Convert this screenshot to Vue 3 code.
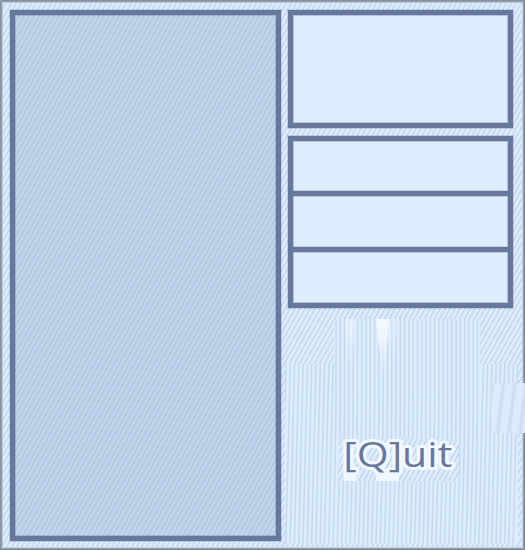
<script setup>
const slots = [1, 2, 3]

// Slanted hatching that covers the whole window.
const diagonals = Array.from({ length: 168 }, (_, i) => `M${i * 5 + 3} 0l-308 550`).join('')

// Near-vertical grain: it starts higher in the middle and drifts left further down.
const grain = Array.from({ length: 55 }, (_, i) => {
  const x = 284.5 + i * 4.29
  const middle = x > 334 && x < 480
  return middle
    ? `M${x} 319V390Q${x} 450 ${x - 3} 544`
    : `M${x + 1.5} 364L${x - 3} 544`
}).join('')
</script>

<template>
  <main class="game">
    <svg class="texture" width="525" height="550" viewBox="0 0 525 550" aria-hidden="true">
      <defs>
        <linearGradient id="fold">
          <stop offset="0" stop-color="#dcecfc" />
          <stop offset=".5" stop-color="#dcecfc" />
          <stop offset=".78" stop-color="#c8dbef" />
          <stop offset="1" stop-color="#dcecfc" />
        </linearGradient>
        <pattern id="wide" width="11.3" height="50" patternUnits="userSpaceOnUse" patternTransform="translate(495 383) skewX(-7)">
          <rect width="11.3" height="50" fill="url(#fold)" />
        </pattern>
        <linearGradient id="glint" x2="0" y2="1">
          <stop offset="0" stop-color="#f4f9ff" />
          <stop offset=".35" stop-color="#f0f7ff" stop-opacity=".9" />
          <stop offset="1" stop-color="#e8f3ff" stop-opacity="0" />
        </linearGradient>
        <clipPath id="grainArea"><path d="M285 364H334V319H480V364H518V544H285z" /></clipPath>
      </defs>
      <rect width="525" height="550" fill="#dcedfe" />
      <path :d="diagonals" stroke="#c3d6eb" stroke-width="1.5" />
      <g clip-path="url(#grainArea)">
        <rect x="285" y="319" width="233" height="225" fill="#dcedfe" />
        <path :d="grain" fill="none" stroke="#c3d7ee" stroke-width="1.4" />
      </g>
      <path d="M345 319h10l-2 50h-5z" fill="url(#glint)" opacity=".5" />
      <path d="M376 319h13l-4 57h-3z" fill="url(#glint)" />
      <path d="M389 319h9l-3 45h-7z" fill="url(#glint)" opacity=".3" />
      <path d="M.5 550V.5H525" fill="none" stroke="#8792a0" />
      <path d="M1.5 549V1.5H524" fill="none" stroke="#959fac" />
      <path d="M2.5 548V2.5H523" fill="none" stroke="#bac8d7" />
      <path d="M524.5 0V549.5H0" fill="none" stroke="#77818c" />
      <path d="M523.5 1V548.5H1" fill="none" stroke="#98a4b1" />
      <path d="M522.5 2V547.5H2" fill="none" stroke="#c0cfdf" />
      <rect x="491" y="383" width="34" height="50" fill="url(#wide)" />
    </svg>

    <section class="panel board"></section>
    <aside class="side">
      <section class="panel preview"></section>
      <section class="panel stats">
        <div v-for="slot in slots" :key="slot" class="stat"></div>
      </section>
      <svg class="quit" width="120" height="42" viewBox="339 439 120 42" role="button">
        <clipPath id="quitArea"><rect x="339" y="439" width="120" height="42" /></clipPath>
        <g clip-path="url(#quitArea)">
          <rect x="339" y="439" width="120" height="42" fill="#dcedfe" />
          <path :d="diagonals" stroke="#c3d6eb" stroke-width="1.5" />
        </g>
        <path d="M344 471h12v10h-12zM376 471h23v10h-23z" fill="#f0f7ff" />
        <text class="label" x="343.3" y="467.4" textLength="109" lengthAdjust="spacingAndGlyphs">[Q]uit</text>
      </svg>
    </aside>
  </main>
</template>

<style>
body { margin: 0; overflow: hidden; }
</style>

<style scoped>
.game {
  position: relative;
  display: flex;
  gap: 7px;
  width: 525px;
  height: 550px;
  padding: 10px 12px 9px 10px;
  box-sizing: border-box;
  overflow: hidden;
}
.texture { position: absolute; top: 0; left: 0; }
.panel {
  position: relative;
  box-sizing: border-box;
  border: 5px solid #68789d;
  box-shadow: 0 0 0 1px rgba(104, 120, 157, .25), inset 0 0 0 1px rgba(104, 120, 157, .35);
}
.board { width: 271px; height: 531px; background: rgba(146, 166, 202, .34); }
.side { display: flex; flex-direction: column; width: 225px; }
.preview { height: 118px; background: #dcedfe; }
.stats {
  display: flex;
  flex-direction: column;
  height: 172px;
  margin-top: 8px;
  background: #dcedfe;
}
.stat { flex: 1; box-sizing: border-box; }
.stat + .stat {
  flex: 0 0 56px;
  border-top: 5px solid #68789d;
  box-shadow: 0 -1px rgba(104, 120, 157, .25), inset 0 1px rgba(104, 120, 157, .3);
}
.quit { position: relative; margin: 131px 0 0 51px; overflow: visible; }
.label {
  font: 35px "Open Sans", "Noto Sans", sans-serif;
  fill: #68789d;
  stroke: #f1f8ff;
  stroke-width: 6px;
  stroke-linejoin: round;
  paint-order: stroke;
}
</style>
